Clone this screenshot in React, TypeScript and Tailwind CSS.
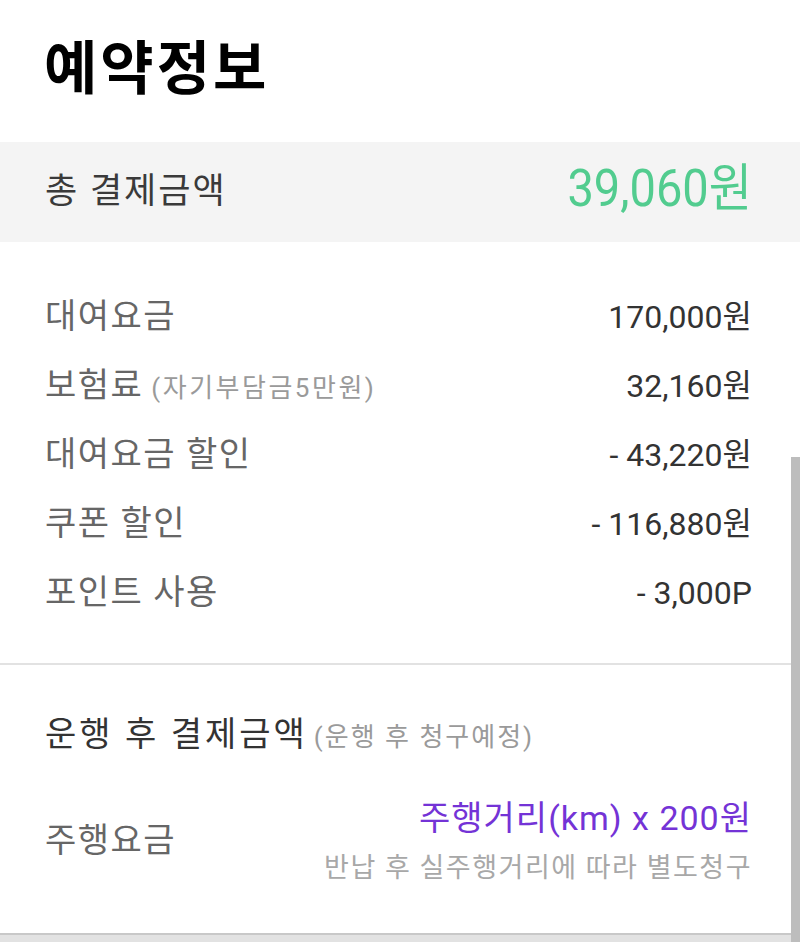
import React from "react";

const font = "font-['Roboto','Noto_Sans_CJK_KR',sans-serif]";

function Row({ label, sub, value }: { label: string; sub?: string; value: string }) {
  return (
    <div className="flex h-[69px] items-center justify-between">
      <div className="flex items-baseline">
        <span className="text-[34px] tracking-[1.5px] text-[#666666]">{label}</span>
        {sub && <span className="ml-[8px] text-[26px] tracking-[2.5px] text-[#9a9a9a]">{sub}</span>}
      </div>
      <span className="text-[32px] text-[#333333]">{value}</span>
    </div>
  );
}

export default function App() {
  return (
    <div className={`relative h-[942px] w-[800px] overflow-hidden bg-white ${font}`}>
      <div className="h-[142px] pl-[44px] pt-[40px]">
        <h1 className="text-[58px] font-bold leading-none tracking-[3px] text-black">예약정보</h1>
      </div>
      <div className="flex h-[100px] items-center justify-between bg-[#f4f4f4] pl-[45px] pr-[48px]">
        <span className="text-[35px] tracking-[2px] text-[#3a3a3a]">총 결제금액</span>
        <span className="origin-bottom scale-y-[1.1] text-[47px] text-[#52cc8f]">39,060원</span>
      </div>
      <div className="pb-[36px] pl-[45px] pr-[48px] pt-[40px]">
        <Row label="대여요금" value="170,000원" />
        <Row label="보험료" sub="(자기부담금5만원)" value="32,160원" />
        <Row label="대여요금 할인" value="- 43,220원" />
        <Row label="쿠폰 할인" value="- 116,880원" />
        <Row label="포인트 사용" value="- 3,000P" />
      </div>
      <div className="h-[2px] bg-[#e2e2e2]" />
      <div className="pl-[45px] pr-[48px] pt-[44px]">
        <div className="flex items-baseline">
          <span className="text-[34px] tracking-[3px] text-[#333333]">운행 후 결제금액</span>
          <span className="ml-[6px] text-[26px] tracking-[2px] text-[#9a9a9a]">(운행 후 청구예정)</span>
        </div>
        <div className="mt-[35px] flex items-center justify-between">
          <span className="text-[34px] tracking-[1.5px] text-[#666666]">주행요금</span>
          <div className="flex flex-col items-end">
            <span className="text-[34px] leading-[46px] tracking-[1px] text-[#7433d6]">주행거리(km) x 200원</span>
            <span className="mt-[9px] text-[27px] leading-[36px] tracking-[1.5px] text-[#a8a8a8]">반납 후 실주행거리에 따라 별도청구</span>
          </div>
        </div>
      </div>
      <div className="absolute bottom-0 left-0 right-0 h-[9px] border-t-2 border-[#c8c8c8] bg-[#e2e2e2]" />
      <div className="absolute bottom-0 right-0 top-[457px] w-[9px] bg-[#bdbdbd]" />
    </div>
  );
}
